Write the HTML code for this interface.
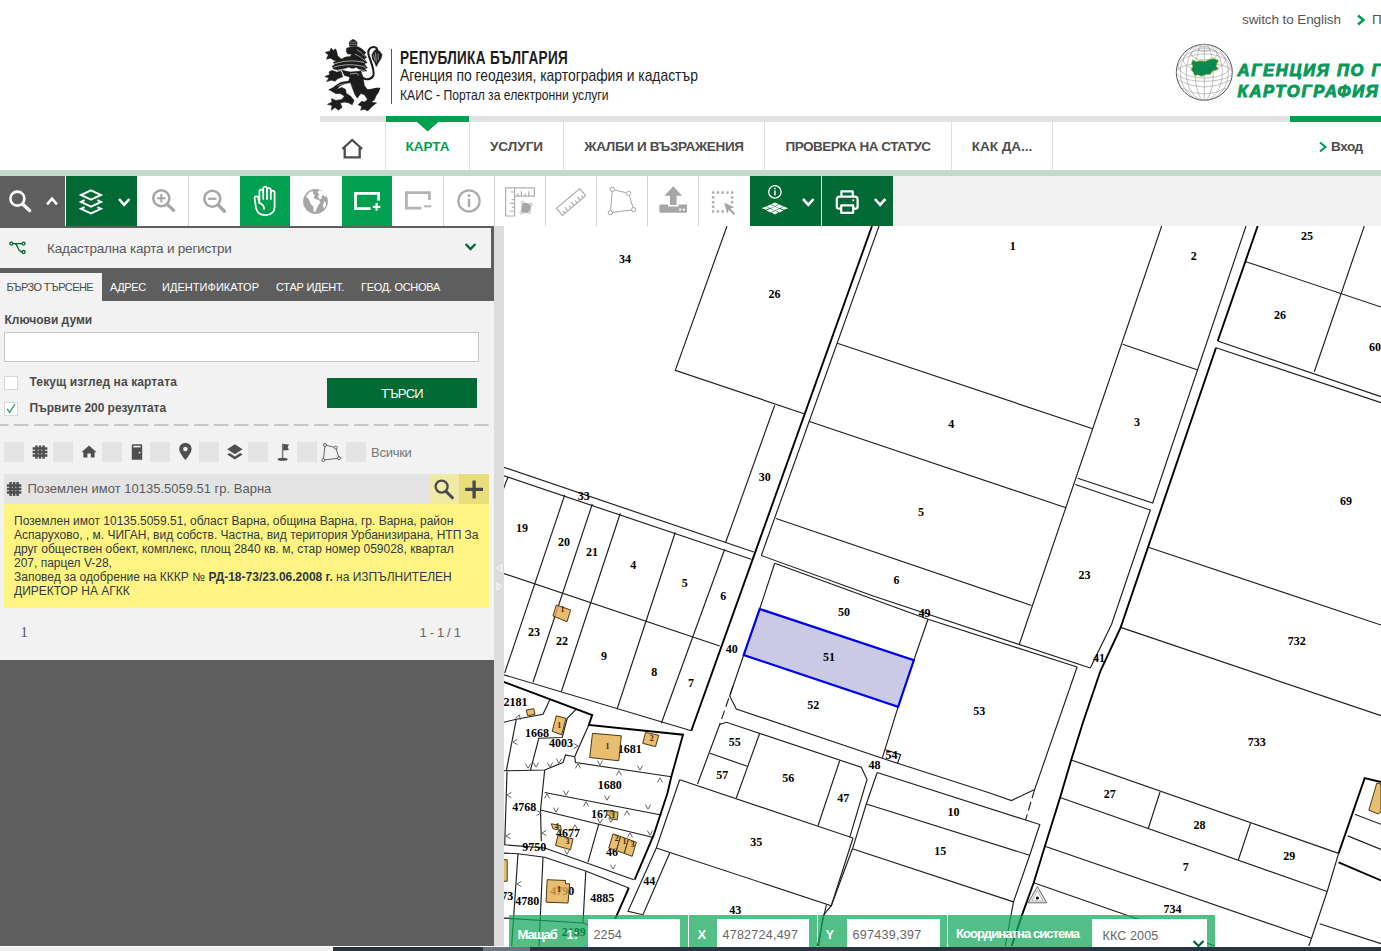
<!DOCTYPE html>
<html lang="bg">
<head>
<meta charset="utf-8">
<title>КАИС - Портал за електронни услуги</title>
<style>
*{box-sizing:border-box;margin:0;padding:0}
html,body{width:1381px;height:951px;overflow:hidden;background:#fff;font-family:"Liberation Sans","DejaVu Sans",sans-serif;color:#4a4a4a}
.abs{position:absolute}
#page{position:relative;width:1381px;height:951px;overflow:hidden;background:#fff}
/* header */
.toplink{position:absolute;top:12px;font-size:13.5px;letter-spacing:-.1px;color:#555;white-space:nowrap}
.hd1{position:absolute;left:400px;top:48px;font-size:17.5px;font-weight:bold;color:#1d1d1b;white-space:nowrap;transform-origin:0 0;transform:scaleX(.775);letter-spacing:.4px}
.hd2{position:absolute;left:400px;top:66px;font-size:17px;color:#1d1d1b;white-space:nowrap;transform-origin:0 0;transform:scaleX(.816)}
.hd3{position:absolute;left:400px;top:85.5px;font-size:15px;color:#1d1d1b;white-space:nowrap;transform-origin:0 0;transform:scaleX(.81)}
.hline{position:absolute;left:320px;top:116px;width:1061px;height:6px;background:#e2e2e2}
.hgreen{position:absolute;top:116px;height:6px;background:#00a050}
.nav{position:absolute;top:122px;height:48px;border-left:1px solid #e0e0e0;font-weight:bold;font-size:13.5px;color:#4d4d4d;white-space:nowrap;line-height:50px;text-align:center}
.strip{position:absolute;left:0;top:170px;width:1381px;height:6px;background:#c2d9cd}
/* toolbar */
#tb{position:absolute;left:0;top:176px;width:1381px;height:50px;background:#f1f1f1}
.tbtn{position:absolute;top:0;height:50px;background:#fff;border-right:1px solid #d6d6d6}
.tbtn svg{position:absolute;left:0;top:0}
/* panel */
#panel{position:absolute;left:0;top:226px;width:494px;height:720px;background:#5e5e5e}
#split{position:absolute;left:494px;top:226px;width:10px;height:720px;background:#dcdcdc}
.tab{position:absolute;top:0;height:33px;line-height:37px;font-size:12px;color:#fff;white-space:nowrap}
.lbl{position:absolute;font-weight:bold;font-size:12px;color:#4a4a4a;white-space:nowrap}
.cb{position:absolute;width:14px;height:14px;background:#fff;border:1px solid #d8d8d8}
.fbox{position:absolute;width:20px;height:19.5px;background:#e4e4e4}
/* map */
#map{position:absolute;left:504px;top:226px;width:877px;height:720px;background:#fff;overflow:hidden}
#bbar{position:absolute;top:915px;height:32px;background:rgba(0,160,80,.70)}
.bseg{position:absolute;top:915px;height:32px;background:rgba(20,168,92,.74)}
.binp{position:absolute;top:919px;height:28px;background:#fff;font-size:12.5px;color:#666;line-height:32px;padding-left:5.5px;white-space:nowrap}
.blab{position:absolute;top:926.5px;font-size:13px;font-weight:bold;color:#fff;white-space:nowrap}
</style>
</head>
<body>
<div id="page">

<!-- ===== header ===== -->
<div class="toplink" style="left:1242px">switch to English</div>
<svg class="abs" style="left:1356px;top:13.5px" width="10" height="12" viewBox="0 0 10 12"><path d="M2 1.6 L7.4 6 L2 10.4" fill="none" stroke="#00a050" stroke-width="2.6"/></svg>
<div class="toplink" style="left:1372px">Профил</div>

<!--LION-->
<svg class="abs" style="left:316px;top:34px" width="80" height="82" viewBox="0 0 928 951">
<g fill="#1d1d1b" stroke="#1d1d1b" stroke-width="6" stroke-linejoin="round">
<path d="M385 98 L398 80 L430 62 L466 82 L478 100 L472 142 L390 142 Z"/>
<path d="M355 165 L400 150 L480 145 L530 170 L578 215 L558 240 L588 270 L560 290 L592 330 L560 345 L596 395 L560 400 L590 428 L540 432 L500 412 L470 386 L420 402 L380 384 L330 404 L260 424 L200 404 L190 370 L222 350 L200 330 L260 300 L300 290 L340 268 L400 260 L412 232 L372 240 L350 200 Z"/>
<path d="M300 296 L250 252 L240 200 L225 172 L200 192 L175 162 L160 200 L106 212 L142 240 L122 292 L170 280 L200 302 L250 316 L290 330 Z"/>
<path d="M290 432 L240 442 L210 428 L180 422 L150 440 L160 470 L102 492 L150 510 L122 552 L180 536 L220 548 L252 520 L310 496 Z"/>
<path d="M300 420 L400 440 L520 430 L545 500 L562 600 L600 648 L650 640 L700 628 L742 628 L722 680 L690 722 L640 760 L622 792 L560 704 L520 690 L478 744 L450 700 L420 620 L400 562 L330 580 L280 600 L240 640 L200 652 L148 646 L200 620 L240 590 L290 560 L380 545 L392 500 L330 480 Z"/>
<path d="M150 645 L240 640 L300 620 L342 640 L352 690 L400 720 L442 770 L420 822 L380 800 L330 790 L282 800 L302 850 L260 884 L220 852 L178 884 L185 830 L132 816 L185 790 L180 748 L230 770 L300 760 L330 720 L280 690 L230 692 Z"/>
<path d="M600 650 L700 630 L742 630 L700 700 L680 760 L642 790 L702 800 L660 832 L600 892 L560 872 L518 884 L530 840 L488 820 L530 780 L560 790 L600 760 L620 700 Z"/>
<path d="M690 184 L732 194 L768 240 L752 290 L720 340 L700 378 L680 330 L654 290 L648 240 L670 200 Z"/>
</g>
<path d="M520 480 C540 530 620 545 662 490 C690 440 640 330 612 250 C590 180 640 130 700 160 L712 190" fill="none" stroke="#1d1d1b" stroke-width="24" stroke-linecap="round"/>
<g fill="none" stroke="#fff" stroke-width="7"><path d="M215 345 C320 310 440 300 560 330"/><path d="M205 385 C320 350 450 345 575 385"/><path d="M395 465 L470 455 L500 480"/><path d="M300 200 C310 230 340 240 400 238"/><path d="M470 180 C510 200 540 230 565 262" stroke-width="6"/><path d="M450 235 C500 250 540 280 572 318" stroke-width="6"/><path d="M230 425 C330 395 450 395 565 425" stroke-width="6"/><path d="M690 215 L700 330 M720 225 L722 300 M668 240 L684 310" stroke-width="6"/><path d="M395 95 H470 M392 120 H472" stroke-width="5"/><path d="M250 600 C300 575 350 575 400 590" stroke-width="5"/></g>
</svg>
<!--/LION-->
<div class="abs" style="left:391px;top:49px;width:1px;height:55px;background:#555"></div>
<div class="hd1">РЕПУБЛИКА БЪЛГАРИЯ</div>
<div class="hd2">Агенция по геодезия, картография и кадастър</div>
<div class="hd3">КАИС - Портал за електронни услуги</div>

<!--GLOBE-->
<svg class="abs" style="left:1174px;top:42px" width="62" height="62" viewBox="1174 42 62 62">
<g fill="none" stroke="#999" stroke-width=".6">
<circle cx="1204.3" cy="72.3" r="28" stroke="#555" stroke-width="1"/>
<ellipse cx="1204.3" cy="72.3" rx="28" ry="9"/><ellipse cx="1204.3" cy="66" rx="26" ry="12"/><ellipse cx="1204.3" cy="60" rx="21" ry="10"/><ellipse cx="1204.3" cy="54" rx="13" ry="6"/><ellipse cx="1204.3" cy="49" rx="6" ry="2.5"/>
<path d="M1178 80 Q1204.3 94 1230.6 80 M1182 88 Q1204.3 100 1226.6 88"/>
<ellipse cx="1204.3" cy="72.3" rx="9" ry="28"/><ellipse cx="1204.3" cy="72.3" rx="18" ry="28"/><ellipse cx="1204.3" cy="72.3" rx="24" ry="28"/><path d="M1204.3 44.3 V100.3"/>
</g>
<path d="M1192.6 59.6 L1196 61.4 L1200 60.6 L1205 61.2 L1210 59 L1214.6 58.6 L1218.8 60.6 L1217 63.6 L1216.6 66.6 L1218.6 69 L1216 70.4 L1213 71 L1210.4 74.4 L1206 74.8 L1201.6 76.4 L1197.6 75 L1194.6 76 L1193.2 72.4 L1191 69.6 L1192.6 66.6 L1191.4 63.4 Z" fill="#0b8a50" stroke="#d8c060" stroke-width=".8"/>
</svg>
<div class="abs" style="left:1237.5px;top:59.5px;font-size:16.5px;line-height:21.4px;font-weight:bold;font-style:italic;color:#07995a;white-space:nowrap;letter-spacing:1.75px;-webkit-text-stroke:1px #07995a">АГЕНЦИЯ ПО ГЕОДЕЗИЯ,<br>КАРТОГРАФИЯ И КАДАСТЪР</div>
<!--/GLOBE-->

<div class="hline"></div>
<div class="hgreen" style="left:386px;width:83px"></div>
<div class="hgreen" style="left:1290px;width:91px"></div>
<svg class="abs" style="left:417px;top:122px" width="22" height="10" viewBox="0 0 22 10"><path d="M0 0 L21.4 0 L10.7 9.4 Z" fill="#00a050"/></svg>

<!-- nav -->
<svg class="abs" style="left:339px;top:135px" width="27" height="26" viewBox="339 135 27 26"><path d="M342.3 149 L352.2 140 L362.1 149 M344.7 147.4 V157.4 H359.7 V147.4" fill="none" stroke="#4d4d4d" stroke-width="2.3" stroke-linejoin="miter"/></svg>
<div class="nav" style="left:385px;width:84px;color:#00a050">КАРТА</div>
<div class="nav" style="left:469px;width:94px">УСЛУГИ</div>
<div class="nav" style="left:563px;width:201px;letter-spacing:-.34px">ЖАЛБИ И ВЪЗРАЖЕНИЯ</div>
<div class="nav" style="left:764px;width:187px;letter-spacing:-.5px">ПРОВЕРКА НА СТАТУС</div>
<div class="nav" style="left:951px;width:102px;border-right:1px solid #e0e0e0">КАК ДА...</div>
<svg class="abs" style="left:1318px;top:141px" width="10" height="12" viewBox="0 0 10 12"><path d="M2 1.5 L7.5 6 L2 10.5" fill="none" stroke="#00a050" stroke-width="2.2"/></svg>
<div class="abs" style="left:1331px;top:139px;font-size:13.5px;font-weight:bold;letter-spacing:-.4px;color:#4d4d4d">Вход</div>
<div class="strip"></div>

<!-- ===== toolbar ===== -->
<div id="tb">
<!--TOOLBAR-->
<svg class="abs" style="left:0;top:0" width="1381" height="50" viewBox="0 176 1381 50">
<!-- backgrounds -->
<rect x="0" y="176" width="65" height="50" fill="#5e5e5e"/>
<rect x="65" y="176" width="1" height="50" fill="#fff"/>
<rect x="66" y="176" width="71" height="50" fill="#006934"/>
<rect x="137" y="176" width="613" height="50" fill="#fff"/>
<rect x="240" y="176" width="50" height="50" fill="#00a050"/>
<rect x="342" y="176" width="50" height="50" fill="#00a050"/>
<g fill="#d4d4d4"><rect x="188" y="176" width="1" height="50"/><rect x="443" y="176" width="1" height="50"/><rect x="494" y="176" width="1" height="50"/><rect x="545" y="176" width="1" height="50"/><rect x="596" y="176" width="1" height="50"/><rect x="647" y="176" width="1" height="50"/><rect x="698" y="176" width="1" height="50"/></g>
<rect x="750" y="176" width="71" height="50" fill="#006934"/>
<rect x="821" y="176" width="1" height="50" fill="#fff"/>
<rect x="822" y="176" width="71" height="50" fill="#006934"/>
<!-- search -->
<g fill="none" stroke="#fff" stroke-linecap="round">
<circle cx="17.4" cy="198.6" r="7" stroke-width="2.6"/>
<path d="M23 204.6 L29.6 210.6" stroke-width="3.4"/>
<path d="M47 204.4 L52 198.8 L57 204.4" stroke-width="2.6" stroke-linecap="butt"/>
</g>
<!-- layers -->
<g fill="none" stroke="#fff" stroke-width="2" stroke-linejoin="miter">
<path d="M91 190.3 L101 195 L91 199.7 L81 195 Z"/>
<path d="M84.6 200.2 L81 201.9 L91 206.6 L101 201.9 L97.4 200.2"/>
<path d="M84.6 207.1 L81 208.8 L91 213.5 L101 208.8 L97.4 207.1"/>
<path d="M119 199 L124.2 204.8 L129.4 199" stroke-width="2.6"/>
</g>
<!-- zoom in -->
<g fill="none" stroke="#a6a6a6" stroke-linecap="round">
<circle cx="161.3" cy="198.2" r="8" stroke-width="2.5"/>
<path d="M167.6 204.6 L173.6 210.4" stroke-width="3.4"/>
<path d="M157.1 198.2 H165.5 M161.3 194 V202.4" stroke-width="2" stroke-linecap="butt"/>
<circle cx="212.3" cy="198.8" r="8" stroke-width="2.5"/>
<path d="M218.6 205.2 L224.4 211.2" stroke-width="3.4"/>
<path d="M208.1 198.8 H216.5" stroke-width="2.2" stroke-linecap="butt"/>
</g>
<!-- hand -->
<g fill="none" stroke="#fff" stroke-width="1.75" stroke-linejoin="round" stroke-linecap="round">
<path d="M259.4 203.2 V191.6 a1.9 1.9 0 0 1 3.8 0 V188.6 a1.9 1.9 0 0 1 3.8 0 V190 a1.9 1.9 0 0 1 3.8 0 V192.6 a1.9 1.9 0 0 1 3.8 0 V207 c0 5 -3.4 8.2 -9 8.2 c-5.4 0 -8.6 -3 -9.6 -7.2 l-1.4 -9.6 c-.3 -2.4 3 -3 3.6 -.6 l1.2 5.4"/>
<path d="M263.2 191.6 V199 M267 190 V199 M270.8 192 V199"/>
<path d="M259.4 203.2 c2.6 .6 4.4 2.4 4.8 5.6"/>
</g>
<!-- globe -->
<circle cx="315.5" cy="201.5" r="12.4" fill="#a6a6a6"/>
<path d="M307.6 194.4 l2.4 -2.6 3.4 -.6 -.6 2.4 2.2 1.6 -1.4 2.2 2 1.8 3.2 .6 1.6 2.6 -2.4 3 -1.2 3.4 -1.6 3.2 -1.6 -.6 -.4 -5 -2.8 -3 -1.6 -4.2 -2.8 -2.6 z M318.6 190.4 l3.4 .4 3 2.4 1.8 3.2 -2.2 .4 -1.4 -1.8 -1.8 1.2 .6 2.4 -2.4 .6 -1.8 -2.4 1.4 -2.6 -1.6 -1.6 z M324.4 201 l1.6 1.8 -.4 3.6 -2 2.2 -.6 -3.4 z" fill="#fff"/>
<!-- zoom rect + -->
<path d="M378.6 200.6 V193.3 H355.5 V208.7 H370.6" fill="none" stroke="#fff" stroke-width="2.8"/>
<path d="M372.8 206.9 H380.4 M376.6 203.1 V210.7" fill="none" stroke="#fff" stroke-width="2.2"/>
<!-- zoom rect - -->
<path d="M429.4 200 V192.7 H406.4 V208.1 H421.4" fill="none" stroke="#b4b4b4" stroke-width="2.8"/>
<path d="M423.8 206.3 H431.2" fill="none" stroke="#b4b4b4" stroke-width="2"/>
<!-- info -->
<circle cx="469" cy="200.9" r="10.6" fill="none" stroke="#adadad" stroke-width="2.3"/>
<path d="M469 198.6 V207" stroke="#adadad" stroke-width="2.4" fill="none"/>
<circle cx="469" cy="195.4" r="1.5" fill="#adadad"/>
<!-- measure area -->
<g fill="none" stroke="#b0b0b0" stroke-width="1.2">
<path d="M505.6 187.8 H534.4 V196.2 H514.6 V216 H505.6 Z"/>
<path d="M514.6 187.8 V196.2 M517.8 196.2 v-3 M521.4 196.2 v-5 M525.2 196.2 v-3 M528.8 196.2 v-5 M514.6 199.6 h-3 M514.6 203.4 h-5 M514.6 207.2 h-3 M514.6 211 h-5 M514.6 192 h-4"/>
</g>
<path d="M522.4 202.4 L531 204.6 L529.6 212.4 L521.2 212.8 Z" fill="#a6a6a6" stroke="#b0b0b0" stroke-width="1"/>
<g fill="#fff" stroke="#b0b0b0" stroke-width=".8"><circle cx="522.4" cy="202.4" r="1.3"/><circle cx="531" cy="204.6" r="1.3"/><circle cx="529.6" cy="212.4" r="1.3"/><circle cx="521.2" cy="212.8" r="1.3"/></g>
<!-- ruler -->
<g transform="translate(571.1 202) rotate(-40)" fill="none" stroke="#b0b0b0" stroke-width="1.3">
<rect x="-15.2" y="-4.6" width="30.4" height="9.2"/>
<path d="M-12 4.6 v-3 M-8 4.6 v-4.4 M-4 4.6 v-3 M0 4.6 v-4.4 M4 4.6 v-3 M8 4.6 v-4.4 M12 4.6 v-3"/>
</g>
<!-- polygon -->
<g fill="#fff" stroke="#a6a6a6" stroke-width="1">
<path d="M612.3 189.4 L628.7 193.4 L633.7 209.7 L610.4 212.7 Z" fill="none"/>
<circle cx="612.3" cy="189.4" r="2.2"/><circle cx="628.7" cy="193.4" r="2.2"/><circle cx="633.7" cy="209.7" r="2.2"/><circle cx="610.4" cy="212.7" r="2.2"/>
</g>
<!-- upload -->
<path d="M673.3 186.2 L682.2 195.8 H676.6 V205 H670 V195.8 H664.4 Z" fill="#a6a6a6"/>
<path d="M660.6 204.4 H668 V206.6 H678.6 V204.4 H686 Q687 204.4 687 205.6 V211.6 Q687 212.8 686 212.8 H660.6 Q659.4 212.8 659.4 211.6 V205.6 Q659.4 204.4 660.6 204.4 Z" fill="#a6a6a6"/>
<rect x="679.2" y="208.6" width="2" height="2" fill="#fff"/><rect x="682.8" y="208.6" width="2" height="2" fill="#fff"/>
<!-- select -->
<g fill="#b0b0b0"><rect x="711.9" y="191.3" width="2.5" height="2.5"/><rect x="716.7" y="191.3" width="2.5" height="2.5"/><rect x="721.4" y="191.3" width="2.5" height="2.5"/><rect x="726.2" y="191.3" width="2.5" height="2.5"/><rect x="730.9" y="191.3" width="2.5" height="2.5"/><rect x="711.9" y="196.1" width="2.5" height="2.5"/><rect x="711.9" y="200.9" width="2.5" height="2.5"/><rect x="711.9" y="205.6" width="2.5" height="2.5"/><rect x="711.9" y="210.2" width="2.5" height="2.5"/><rect x="730.9" y="196.1" width="2.5" height="2.5"/><rect x="730.9" y="200.9" width="2.5" height="2.5"/><rect x="716.7" y="210.2" width="2.5" height="2.5"/><rect x="721.4" y="210.2" width="2.5" height="2.5"/></g>
<path d="M724.2 202.8 L734.4 207.2 L730.4 208.6 L735.4 213.6 L733.8 215 L728.8 210 L727.2 213.8 Z" fill="#a6a6a6"/>
<!-- info layers -->
<circle cx="774.9" cy="191.9" r="6.2" fill="none" stroke="#fff" stroke-width="1.3"/>
<path d="M774.9 190.6 V195.6" stroke="#fff" stroke-width="1.5"/><circle cx="774.9" cy="188.6" r=".9" fill="#fff"/>
<g fill="#fff">
<path d="M774.9 202.4 l4 1.9 -4 1.9 -4 -1.9z"/>
<path d="M770.4 204.5 l4 1.9 -4 1.9 -4 -1.9z M779.4 204.5 l4 1.9 -4 1.9 -4 -1.9z"/>
<path d="M765.9 206.6 l3.4 1.6 -3.4 1.6 -4.4 -1.6z M774.9 206.6 l4 1.9 -4 1.9 -4 -1.9z M783.9 206.6 l4.4 1.6 -4.4 1.6 -3.4 -1.6z"/>
<path d="M770.4 208.7 l4 1.9 -4 1.9 -4 -1.9z M779.4 208.7 l4 1.9 -4 1.9 -4 -1.9z"/>
<path d="M774.9 210.8 l3.4 1.6 -3.4 2.2 -3.4 -2.2z"/>
</g>
<path d="M803 199 L808.3 204.8 L813.5 199" fill="none" stroke="#fff" stroke-width="2.6"/>
<!-- print -->
<g fill="none" stroke="#fff" stroke-width="2.2" stroke-linejoin="round">
<path d="M841.4 196.4 V191.4 H852.8 V196.4"/>
<path d="M841 208.6 H838.6 Q836.8 208.6 836.8 206.8 V199.4 Q836.8 196.6 839.6 196.6 H854.8 Q857.6 196.6 857.6 199.4 V206.8 Q857.6 208.6 855.8 208.6 H853.4"/>
<path d="M841.2 205.4 H853.2 V212.8 H841.2 Z"/>
</g>
<rect x="852.4" y="199.4" width="1.8" height="1.8" fill="#fff"/>
<path d="M874.9 199 L880.1 204.8 L885.4 199" fill="none" stroke="#fff" stroke-width="2.6"/>
</svg>
<!--/TOOLBAR-->
</div>

<!-- ===== left panel ===== -->
<div id="panel">
<!--PANEL-->
<div class="abs" style="left:0;top:2px;width:491px;height:40px;background:#f2f2f2"></div>
<svg class="abs" style="left:8px;top:13px" width="22" height="16" viewBox="8 239 22 16"><g fill="none" stroke="#006633" stroke-width="1.3"><circle cx="11.3" cy="243.6" r="1.5"/><circle cx="23.6" cy="243.6" r="1.5"/><circle cx="23.6" cy="252" r="1.5"/><path d="M12.8 243.6 H22.1 M14.6 243.6 C18 243.6 17.4 252 22.1 252"/></g></svg>
<div class="abs" style="left:47px;top:15px;font-size:13.5px;letter-spacing:-.2px;color:#585858;white-space:nowrap">Кадастрална карта и регистри</div>
<svg class="abs" style="left:464px;top:16px" width="13" height="10" viewBox="0 0 13 10"><path d="M1.6 2 L6.5 7 L11.4 2" fill="none" stroke="#006633" stroke-width="2.4"/></svg>
<!-- tabs -->
<div class="abs" style="left:0;top:47px;width:102px;height:28px;background:#f2f2f2"></div>
<div class="tab" style="left:6.5px;top:43px;color:#4a4a4a;font-size:11px;letter-spacing:-.57px">БЪРЗО ТЪРСЕНЕ</div>
<div class="tab" style="left:110px;top:43px;font-size:11px;letter-spacing:-.4px">АДРЕС</div>
<div class="tab" style="left:162px;top:43px;font-size:11px;letter-spacing:.04px">ИДЕНТИФИКАТОР</div>
<div class="tab" style="left:276px;top:43px;font-size:11px;letter-spacing:-.25px">СТАР ИДЕНТ.</div>
<div class="tab" style="left:361px;top:43px;font-size:11px;letter-spacing:-.29px">ГЕОД. ОСНОВА</div>
<!-- body -->
<div class="abs" style="left:0;top:75px;width:494px;height:359px;background:#f2f2f2"></div>
<div class="lbl" style="left:4.5px;top:86.5px">Ключови думи</div>
<div class="abs" style="left:4px;top:106px;width:475px;height:30px;background:#fff;border:1px solid #c6c6c6"></div>
<div class="cb" style="left:4px;top:150px"></div>
<div class="lbl" style="left:29.5px;top:149px;letter-spacing:.11px">Текущ изглед на картата</div>
<div class="cb" style="left:4px;top:175.5px"></div>
<svg class="abs" style="left:4px;top:175px" width="15" height="15" viewBox="0 0 15 15"><path d="M3.2 7.8 L5.6 11.4 L11 3.2" fill="none" stroke="#2a9a6a" stroke-width="1.3"/></svg>
<div class="lbl" style="left:29.5px;top:175px;letter-spacing:-.05px">Първите 200 резултата</div>
<div class="abs" style="left:327px;top:152px;width:150px;height:30px;background:#006b35;color:#fff;text-align:center;font-size:13px;letter-spacing:-.7px;line-height:31px">ТЪРСИ</div>
<svg class="abs" style="left:0;top:197px" width="490" height="4"><path d="M-6 2 H490" stroke="#c6c6c6" stroke-width="2" stroke-dasharray="14.5 5.5"/></svg>
<!-- filter row -->
<div class="fbox" style="left:4px;top:216px"></div>
<div class="fbox" style="left:53px;top:216px"></div>
<div class="fbox" style="left:101.5px;top:216px"></div>
<div class="fbox" style="left:150px;top:216px"></div>
<div class="fbox" style="left:199px;top:216px"></div>
<div class="fbox" style="left:247.5px;top:216px"></div>
<div class="fbox" style="left:296.5px;top:216px"></div>
<div class="fbox" style="left:345.5px;top:216px"></div>
<svg class="abs" style="left:0;top:214px" width="350" height="24" viewBox="0 440 350 24">
<g fill="none" stroke="#4f4f4f" stroke-width="2.5"><path d="M36.4 445.4 V458.8 M40 445.4 V458.8 M43.6 445.4 V458.8 M32.6 448.6 H47.4 M32.6 452.1 H47.4 M32.6 455.6 H47.4"/></g>
<path d="M89 445.6 L96.6 452.2 H94.6 V457.6 H90.8 V453.6 H87.4 V457.6 H83.4 V452.2 H81.4 Z" fill="#4f4f4f"/>
<path d="M131.8 445.4 Q131.8 444.2 133 444.2 H141 Q142.2 444.2 142.2 445.4 V459.8 H131.8 Z" fill="#4f4f4f"/><rect x="133.4" y="445.8" width="7.2" height="1.6" fill="#f2f2f2"/><circle cx="139.6" cy="452.6" r=".9" fill="#f2f2f2"/>
<path d="M185.4 443 C181.8 443 179.2 445.6 179.2 449 C179.2 453.2 185.4 460 185.4 460 C185.4 460 191.6 453.2 191.6 449 C191.6 445.6 189 443 185.4 443 Z" fill="#4f4f4f"/><circle cx="185.4" cy="449" r="2.3" fill="#f2f2f2"/>
<path d="M234.9 444.2 L242.6 449.2 L234.9 454.2 L227.2 449.2 Z" fill="#4f4f4f"/><path d="M229.6 453 L227.2 454.6 L234.9 459.6 L242.6 454.6 L240.2 453 L234.9 456.5 Z" fill="#4f4f4f"/>
<path d="M282.6 443.6 V458.6" stroke="#777" stroke-width="1.4"/><path d="M283.2 444 L289 444.6 L287.6 447.2 L289 450 L283.2 450.4 Z" fill="#4f4f4f"/><ellipse cx="282.6" cy="459.2" rx="5" ry="1.5" fill="#4f4f4f"/>
<g fill="#f2f2f2" stroke="#666" stroke-width="1"><path d="M325 445 L335.8 447.6 L339 458.2 L323.4 460 Z" fill="none"/><circle cx="325" cy="445" r="1.5"/><circle cx="335.8" cy="447.6" r="1.5"/><circle cx="339" cy="458.2" r="1.5"/><circle cx="323.4" cy="460" r="1.5"/></g>
</svg>
<div class="abs" style="left:371px;top:219px;font-size:13px;letter-spacing:-.26px;color:#777;white-space:nowrap">Всички</div>
<!-- result header -->
<div class="abs" style="left:4px;top:248px;width:425px;height:30px;background:#e4e4e4"></div>
<div class="abs" style="left:429px;top:248px;width:30px;height:30px;background:#efeaa6"></div>
<div class="abs" style="left:459px;top:248px;width:30px;height:30px;background:#e8df7c"></div>
<svg class="abs" style="left:4px;top:248px" width="486" height="30" viewBox="4 474 486 30">
<g fill="none" stroke="#4f4f4f" stroke-width="2.5"><path d="M10.6 482 V496 M14.1 482 V496 M17.6 482 V496 M6.9 485.4 H21.3 M6.9 489 H21.3 M6.9 492.6 H21.3"/></g>
<circle cx="441.6" cy="486.6" r="6" fill="none" stroke="#4a4a4a" stroke-width="2.3"/><path d="M446 491.4 L452.4 497.8" stroke="#4a4a4a" stroke-width="3" stroke-linecap="round"/>
<path d="M465.2 489.4 H483 M474.1 480.4 V498.4" stroke="#4a4a4a" stroke-width="3.3"/>
</svg>
<div class="abs" style="left:27.5px;top:255px;font-size:13px;color:#5a5a5a;white-space:nowrap">Поземлен имот 10135.5059.51 гр. Варна</div>
<!-- yellow -->
<div class="abs" style="left:4px;top:278px;width:485px;height:104px;background:#fff482"></div>
<div class="abs" style="left:14px;top:287.5px;width:472px;font-size:12px;line-height:14px;color:#2e3946;white-space:nowrap">Поземлен имот 10135.5059.51, област Варна, община Варна, гр. Варна, район<br>Аспарухово, , м. ЧИГАН, вид собств. Частна, вид територия Урбанизирана, НТП За<br>друг обществен обект, комплекс, площ 2840 кв. м, стар номер 059028, квартал<br>207, парцел V-28,<br>Заповед за одобрение на КККР № <b>РД-18-73/23.06.2008 г.</b> на ИЗПЪЛНИТЕЛЕН<br>ДИРЕКТОР НА АГКК</div>
<div class="abs" style="left:20.5px;top:398px;font-family:'Liberation Serif',serif;font-size:14.5px;color:#555">1</div>
<div class="abs" style="left:419.5px;top:399px;font-size:13px;letter-spacing:-.34px;color:#666;white-space:nowrap">1 - 1 / 1</div>
<!--/PANEL-->
</div>
<div id="split"></div>

<!-- ===== map ===== -->
<div id="map">
<!--MAP-->
<svg class="abs" style="left:0;top:0" width="877" height="720" viewBox="504 226 877 720" font-family="'Liberation Serif','DejaVu Serif',serif" font-weight="bold" font-size="12" text-anchor="middle" fill="#000">
<polygon points="759.7,609 913.8,660.3 898.1,706.9 743.7,655" fill="#cacae6"/>
<g fill="none" stroke="#1e1e1e" stroke-width="1.15">
<polyline points="727,226 675.3,370.3 804,413.7"/>
<polyline points="879,226 761.3,555.5"/>
<polyline points="837.3,343.3 1092.7,428.7"/>
<polyline points="808.7,421.2 1066,507.7"/>
<polyline points="774.7,405.3 725.7,542.3"/>
<polyline points="776,518.5 1031.5,605.5"/>
<polyline points="503,467 753.7,552"/>
<polyline points="503,475.5 751.3,559.3"/>
<polyline points="1161.7,226 1019.3,644.3"/>
<polyline points="1122.7,344.3 1197.7,370"/>
<polyline points="1246,226 1152.7,503 1077.7,478.3"/>
<polyline points="1075.3,484.5 1150.3,510 1111.6,624.3 1090.3,668"/>
<polyline points="1246,261.7 1381,307"/>
<polyline points="1364.3,226 1314.3,371.7"/>
<polyline points="1217.7,341 1381,396.7"/>
<polyline points="1216,347.7 1381,402.7"/>
<polyline points="761.3,555.5 873.2,596 1090.3,668"/>
<polyline points="774.7,563.3 928,619.3 1077.1,667"/>
<polyline points="774.7,563.3 759.7,609 743.7,655 729.7,696 736.3,709 882.3,758.2"/>
<polyline points="928,619.3 913.8,660.3"/>
<polyline points="898.1,706.9 882.3,758.2"/>
<polyline points="885.4,749.7 900.6,754.6 897.5,763.3 882.3,758.2"/>
<polyline points="897.5,763.3 989.8,793 1011.4,800.6 1034.7,789.4"/>
<polyline points="1077.1,667 1034.7,789.4"/>
<polyline points="697.5,784 719.7,724.5 726.5,722.3 861.3,767.3 867,779.5 849.7,837.3"/>
<polyline points="710,753.3 747.3,766.3"/>
<polyline points="759.7,733.3 736.3,798"/>
<polyline points="839.7,760.7 818,825.7"/>
<polyline points="679.7,779.7 853,838 831.3,905.7 656.3,848"/>
<polyline points="679.7,779.7 656.3,848 628,911.3 643,914.7 669.7,853"/>
<polyline points="831.3,905.7 823,915.7 818,951"/>
<polyline points="826.3,905 816.3,951"/>
<polyline points="877.2,772.5 866.3,804 853,847.3 831.3,905.7"/>
<polyline points="877.2,772.5 1039.8,824.5 1029.7,855.3 1013.5,901.9 1004.3,951"/>
<polyline points="866.3,804 1029.7,855.3"/>
<polyline points="853,849 1013.5,901.9"/>
<polyline points="508,477 503,490"/>
<polyline points="564.7,495 504.7,673"/>
<polyline points="592.3,504 533,682.3"/>
<polyline points="620.3,513.3 561.3,691.7"/>
<polyline points="675.3,532.3 617,709.3"/>
<polyline points="724.7,549.3 661.3,723.3"/>
<polyline points="503,573.3 719.7,646"/>
<polyline points="503,674.5 691.3,730.7"/>
<polyline points="503,722.5 516.3,719.2 543,714.2 549.7,700"/>
<polyline points="516.3,719.2 506.3,770.8"/>
<polyline points="576.3,709.2 567.2,718.3 562.2,737.5 538.8,738.3 530.5,770"/>
<polyline points="503,770.8 544.7,770 563,762.5 565.5,755 574.7,756.7"/>
<polyline points="588.8,725 574.7,756.7 575.5,762.5 671.3,776.7"/>
<polyline points="544.7,792.5 661.3,815"/>
<polyline points="544.7,770 540.5,810 541.3,841.3"/>
<polyline points="540.5,810 652.2,837.2"/>
<polyline points="507,771.7 504.7,844.7"/>
<polyline points="598.8,823.8 588,862.2"/>
<polyline points="503,844.7 544.7,848 633.8,879.7"/>
<polyline points="503,853 518,853.8 544.7,857.2 586.3,871.3 628.8,888"/>
<polyline points="518,853.8 511.3,951"/>
<polyline points="543,857.2 538.8,951"/>
<polyline points="585.8,871.3 583,923"/>
<polyline points="503,918 583,923 616,934"/>
<polyline points="1148.3,547.3 1381,625"/>
<polyline points="1120.7,627.4 1381,715.7"/>
<polyline points="1071.2,760 1338.6,853.4"/>
<polyline points="1060.1,797.5 1327.2,891.5"/>
<polyline points="1160,792 1148.3,828.5"/>
<polyline points="1250.5,823.3 1238.3,860"/>
<polyline points="1044.9,846.2 1311.5,938.3"/>
<polyline points="1033.7,882.7 1214.3,945.7"/>
<polyline points="1338.6,853.4 1327.2,891.5 1311.5,938.3 1307,951"/>
<polyline points="1354.7,814.2 1381,824.3"/>
<polyline points="1347.7,835.9 1381,849.4"/>
<polyline points="1319.6,923.7 1381,943.7"/>
</g>
<g fill="none" stroke="#1a1a1a" stroke-width="1.1" stroke-dasharray="9 4">
<polyline points="1034.7,789.4 1025.6,819.8"/>
<polyline points="733,686 719.7,724.5"/>
</g>
<g fill="none" stroke="#000" stroke-width="1.9">
<polyline points="872,226 691.3,730.7"/>
<polyline points="1257.7,226 1217.7,341"/>
<polyline points="1216,347.7 1120.7,627.4 1100.4,671 1083.2,721.7 1071.2,760 1060.1,797.5 1044.9,846.2 1033.7,882.7 1021.6,916.1 1010,951"/>
<polyline points="503,681.7 592.2,715 588.8,725 683,734.7 671.3,776.7 667.5,793 653.8,834.7 634.7,879.7"/>
<polyline points="628.8,888 616.3,916.3 610,932"/>
<polyline points="1381,782.1 1364.7,778.1 1338.6,853.4"/>
<polyline points="1338.6,862.4 1381,880.5"/>
</g>
<polygon points="759.7,609 913.8,660.3 898.1,706.9 743.7,655" fill="none" stroke="#0000f0" stroke-width="2.2"/>
<g fill="none" stroke="#666" stroke-width="1">
<polyline points="520.3,720.1 519.4,714.9 515.4,718.3"/>
<polyline points="517.4,739.4 512.8,742.0 517.4,744.6"/>
<polyline points="511.4,792.4 506.8,795.0 511.4,797.6"/>
<polyline points="525.4,763.6 528.0,768.2 530.6,763.6"/>
<polyline points="533.4,762.6 536.0,767.2 538.6,762.6"/>
<polyline points="547.4,762.6 550.0,767.2 552.6,762.6"/>
<polyline points="556.4,758.6 559.0,763.2 561.6,758.6"/>
<polyline points="573.6,748.6 578.2,746.0 573.6,743.4"/>
<polyline points="580.6,768.4 578.0,763.8 575.4,768.4"/>
<polyline points="597.4,760.6 600.0,765.2 602.6,760.6"/>
<polyline points="621.6,775.4 619.0,770.8 616.4,775.4"/>
<polyline points="637.4,765.6 640.0,770.2 642.6,765.6"/>
<polyline points="662.6,782.4 660.0,777.8 657.4,782.4"/>
<polyline points="563.4,790.6 566.0,795.2 568.6,790.6"/>
<polyline points="588.6,806.4 586.0,801.8 583.4,806.4"/>
<polyline points="604.4,795.6 607.0,800.2 609.6,795.6"/>
<polyline points="629.6,815.4 627.0,810.8 624.4,815.4"/>
<polyline points="645.4,804.6 648.0,809.2 650.6,804.6"/>
<polyline points="549.6,798.4 547.0,793.8 544.4,798.4"/>
<polyline points="536.6,815.6 541.2,813.0 536.6,810.4"/>
<polyline points="553.4,807.6 556.0,812.2 558.6,807.6"/>
<polyline points="577.6,829.4 575.0,824.8 572.4,829.4"/>
<polyline points="597.4,818.6 600.0,823.2 602.6,818.6"/>
<polyline points="608.4,817.6 611.0,822.2 613.6,817.6"/>
<polyline points="632.6,837.4 630.0,832.8 627.4,837.4"/>
<polyline points="647.4,830.6 650.0,835.2 652.6,830.6"/>
<polyline points="546.4,830.4 541.8,833.0 546.4,835.6"/>
<polyline points="564.4,849.6 567.0,854.2 569.6,849.6"/>
<polyline points="610.4,864.6 613.0,869.2 615.6,864.6"/>
<polyline points="510.4,833.4 505.8,836.0 510.4,838.6"/>
<polyline points="521.4,881.4 516.8,884.0 521.4,886.6"/>
</g>
<g fill="none" stroke="#666" stroke-width="1"><polygon points="1037.4,886.6 1046.6,902.8 1028.2,902.8" fill="#eee"/><polygon points="1037.4,890.6 1043,900.8 1031.8,900.8" stroke="#999" stroke-width=".7" fill="#fff"/></g><circle cx="1037.4" cy="898" r="1.5" fill="#000"/>
<text x="625" y="263.1">34</text>
<text x="774.5" y="297.6">26</text>
<text x="1012.7" y="250.1">1</text>
<text x="1193.7" y="259.6">2</text>
<text x="1307" y="240.1">25</text>
<text x="1280" y="319.1">26</text>
<text x="1375" y="350.8">60</text>
<text x="951.3" y="427.6">4</text>
<text x="1137" y="426.1">3</text>
<text x="764.7" y="480.8">30</text>
<text x="921" y="515.8">5</text>
<text x="1346" y="505.1">69</text>
<text x="583.7" y="499.8">33</text>
<text x="522" y="531.6">19</text>
<text x="564" y="546.1">20</text>
<text x="592" y="555.6">21</text>
<text x="633.3" y="569.4">4</text>
<text x="684.7" y="587.1">5</text>
<text x="723.3" y="600.1">6</text>
<text x="896.5" y="584.1">6</text>
<text x="1084.5" y="579.1">23</text>
<text x="844" y="616.1">50</text>
<text x="924.5" y="617.1">49</text>
<text x="534" y="636.1">23</text>
<text x="562" y="645.4">22</text>
<text x="604" y="659.8">9</text>
<text x="654.3" y="676.1">8</text>
<text x="691" y="687.1">7</text>
<text x="731.7" y="653.1">40</text>
<text x="829" y="660.6">51</text>
<text x="1296.7" y="644.6">732</text>
<text x="1099" y="661.9">41</text>
<text x="813.3" y="709.4">52</text>
<text x="979.3" y="714.7">53</text>
<text x="515.5" y="705.8">2181</text>
<text x="537" y="736.6">1668</text>
<text x="561" y="746.6">4003</text>
<text x="629.7" y="752.8">1681</text>
<text x="734.7" y="746.1">55</text>
<text x="1256.7" y="746.4">733</text>
<text x="891.4" y="759.3">54</text>
<text x="874.6" y="769.4">48</text>
<text x="722.2" y="778.8">57</text>
<text x="788.3" y="782.4">56</text>
<text x="609.7" y="789.1">1680</text>
<text x="1109.8" y="797.6">27</text>
<text x="843.3" y="801.6">47</text>
<text x="524.3" y="810.8">4768</text>
<text x="953.5" y="816.4">10</text>
<text x="603" y="817.9">1679</text>
<text x="1199.6" y="829">28</text>
<text x="568" y="837.1">4677</text>
<text x="756.3" y="846.1">35</text>
<text x="534.3" y="851.3">9750</text>
<text x="940.3" y="855.4">15</text>
<text x="1289.2" y="859.6">29</text>
<text x="1185.8" y="871">7</text>
<text x="649.3" y="884.6">44</text>
<text x="562.2" y="895.4">4790</text>
<text x="602.2" y="902.1">4885</text>
<text x="527.2" y="905.4">4780</text>
<text x="507.2" y="900.4">73</text>
<text x="735.3" y="913.8">43</text>
<text x="1172.6" y="913.1">734</text>
<text x="573.8" y="936.3">2189</text>
<text x="612" y="855.6">46</text>
<g fill="#e2ac4c" fill-opacity=".8" stroke="#4a3a14" stroke-width="1">
<polygon points="556.3,605 570.7,610 567,621.7 553,616"/>
<polygon points="526.3,710 533.8,708.7 535,714.2 527.7,715.8"/>
<polygon points="556.3,715.8 566,718.3 561.7,734.7 552.2,731.3"/>
<polygon points="592.5,733.3 621.3,735.8 618.8,760.8 589.7,757.5"/>
<polygon points="645.5,732.5 658.8,735.3 655.5,746.7 642.7,743.3"/>
<polygon points="607,810.5 618,812.2 617.2,819.8 610.5,818.8 609.7,815.5 606.3,814.7"/>
<polygon points="551.3,823.8 560.5,825.5 561.3,830.5 553,828.8"/>
<polygon points="558,835.5 573,838.8 570.5,849.7 555.5,845.5"/>
<polygon points="613,833.8 620.6,836.5 616.4,850.6 608.8,848"/>
<polygon points="620.6,836.5 628.4,839.3 624.3,853.4 616.4,850.6"/>
<polygon points="628.4,839.3 636.3,842.2 632.2,856.3 624.3,853.4"/>
<polygon points="547.2,879.7 565.5,880.5 565.5,883.8 569.7,883.8 568,903 546,902.2"/>
<polygon points="503,859.7 507.2,859.7 507.2,881.3 503,881.3"/>
<polygon points="1376.8,783.1 1381,784 1381,812 1377.8,813.8 1368.8,810.2"/>
</g>
<g font-size="8" fill="#3a2a0a">
<text x="562.5" y="612.3">1</text>
<text x="559.3" y="727.8">1</text>
<text x="607.5" y="748.8">1</text>
<text x="651.8" y="741.3">2</text>
<text x="613.5" y="817.8">1</text>
<text x="557" y="828.8">4</text>
<text x="567.5" y="843.8">3</text>
<text x="616.7" y="840.8">2</text>
<text x="624.5" y="844.3">1</text>
<text x="632.5" y="847.3">3</text>
<text x="559" y="891.8">1</text>
</g>
</svg>
<!--/MAP-->
</div>

<!-- bottom bar -->
<!--BBAR-->
<div class="bseg" style="left:509px;width:179px"></div>
<div class="bseg" style="left:689px;width:128px"></div>
<div class="bseg" style="left:818px;width:129px"></div>
<div class="bseg" style="left:948px;width:267px"></div>
<div class="blab" style="left:517.5px;letter-spacing:-1.1px">Мащаб</div><div class="blab" style="left:566.5px">1:</div>
<div class="binp" style="left:588px;width:92px;letter-spacing:.15px">2254</div>
<div class="blab" style="left:697.5px">X</div>
<div class="binp" style="left:717px;width:92px;letter-spacing:.25px">4782724,497</div>
<div class="blab" style="left:825.5px">Y</div>
<div class="binp" style="left:847px;width:93px;letter-spacing:.3px">697439,397</div>
<div class="blab" style="left:956px;letter-spacing:-.91px;top:925.5px">Координатна система</div>
<div class="binp" style="left:1092px;width:115px;padding-left:10.5px;line-height:34px;letter-spacing:.15px">ККС 2005</div>
<svg class="abs" style="left:1192px;top:940px" width="13" height="8" viewBox="0 0 13 8"><path d="M1.5 1 L6.5 6 L11.5 1" fill="none" stroke="#006633" stroke-width="2.2"/></svg>
<div class="abs" style="left:0;top:947px;width:333px;height:4px;background:#f0f0f0"></div>
<div class="abs" style="left:333px;top:947px;width:1048px;height:4px;background:#28343e"></div>
<div class="abs" style="left:483px;top:947px;width:47px;height:4px;background:#6a747c"></div>
<svg class="abs" style="left:494px;top:560px" width="10" height="34" viewBox="0 0 10 34"><path d="M7.5 4.5 L3 8 L7.5 11.5 Z M3 23 L7.5 26.5 L3 30 Z" fill="none" stroke="#fff" stroke-width="1"/></svg>
<!--/BBAR-->

</div>
</body>
</html>
